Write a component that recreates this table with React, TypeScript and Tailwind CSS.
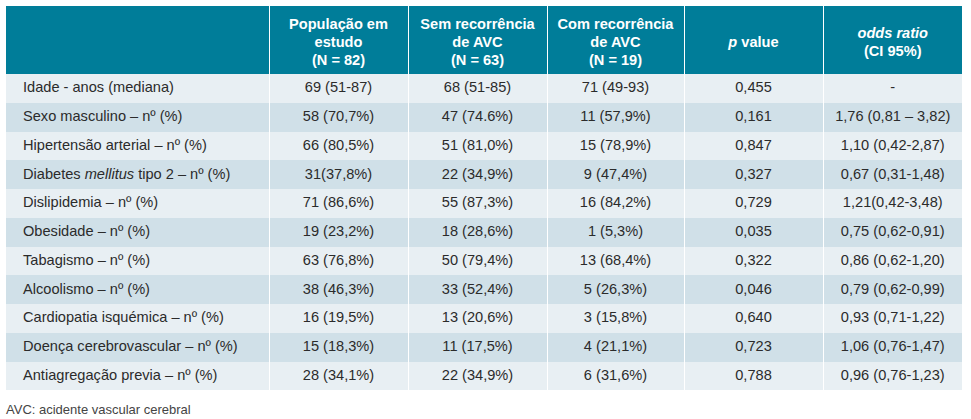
const rows: [React.ReactNode, string, string, string, string, string][] = [
  ['Idade - anos (mediana)', '69 (51-87)', '68 (51-85)', '71 (49-93)', '0,455', '-'],
  ['Sexo masculino – nº (%)', '58 (70,7%)', '47 (74.6%)', '11 (57,9%)', '0,161', '1,76 (0,81 – 3,82)'],
  ['Hipertensão arterial – nº (%)', '66 (80,5%)', '51 (81,0%)', '15 (78,9%)', '0,847', '1,10 (0,42-2,87)'],
  [
    <>Diabetes <i>mellitus</i> tipo 2 – nº (%)</>,
    '31(37,8%)', '22 (34,9%)', '9 (47,4%)', '0,327', '0,67 (0,31-1,48)',
  ],
  ['Dislipidemia – nº (%)', '71 (86,6%)', '55 (87,3%)', '16 (84,2%)', '0,729', '1,21(0,42-3,48)'],
  ['Obesidade – nº (%)', '19 (23,2%)', '18 (28,6%)', '1 (5,3%)', '0,035', '0,75 (0,62-0,91)'],
  ['Tabagismo – nº (%)', '63 (76,8%)', '50 (79,4%)', '13 (68,4%)', '0,322', '0,86 (0,62-1,20)'],
  ['Alcoolismo – nº (%)', '38 (46,3%)', '33 (52,4%)', '5 (26,3%)', '0,046', '0,79 (0,62-0,99)'],
  ['Cardiopatia isquémica – nº (%)', '16 (19,5%)', '13 (20,6%)', '3 (15,8%)', '0,640', '0,93 (0,71-1,22)'],
  ['Doença cerebrovascular – nº (%)', '15 (18,3%)', '11 (17,5%)', '4 (21,1%)', '0,723', '1,06 (0,76-1,47)'],
  ['Antiagregação previa – nº (%)', '28 (34,1%)', '22 (34,9%)', '6 (31,6%)', '0,788', '0,96 (0,76-1,23)'],
];

export default function App() {
  return (
    <div className="bg-white w-[971px] h-[419px] pt-[6px] pl-[6px] font-['Liberation_Sans',Arial,sans-serif] text-[#2b2b2b]">
      <table className="table-fixed border-collapse w-[956px] text-[14.6px]">
        <colgroup>
          <col className="w-[263px]" />
          <col className="w-[139px]" />
          <col className="w-[139px]" />
          <col className="w-[137px]" />
          <col className="w-[139px]" />
          <col className="w-[139px]" />
        </colgroup>
        <thead>
          <tr className="bg-[#007d99] text-white font-bold h-[68px] leading-[18px]">
            <th></th>
            <th className="border-l border-white text-center align-middle px-1 pt-[4px]">População em<br />estudo<br />(N = 82)</th>
            <th className="border-l border-white text-center align-middle px-1 pt-[4px]">Sem recorrência<br />de AVC<br />(N = 63)</th>
            <th className="border-l border-white text-center align-middle px-1 pt-[4px]">Com recorrência<br />de AVC<br />(N = 19)</th>
            <th className="border-l border-white text-center align-middle px-1 pt-[4px]"><i>p</i> value</th>
            <th className="border-l border-white text-center align-middle px-1 pt-[4px]"><i>odds ratio</i><br />(CI 95%)</th>
          </tr>
        </thead>
        <tbody>
          {rows.map((r, i) => (
            <tr key={i} className={`h-[28.75px] ${i % 2 === 0 ? 'bg-[#e8eff3]' : 'bg-[#d0e0e8]'}`}>
              <td className="pl-[17px] whitespace-nowrap">{r[0]}</td>
              {r.slice(1).map((c, j) => (
                <td key={j} className="border-l border-white text-center whitespace-nowrap">{c}</td>
              ))}
            </tr>
          ))}
        </tbody>
      </table>
      <div className="mt-[10px] text-[13px] text-[#444]">AVC: acidente vascular cerebral</div>
    </div>
  );
}
